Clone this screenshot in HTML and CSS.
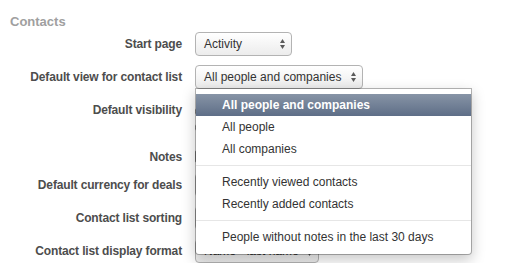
FILE: index.html
```html
<!DOCTYPE html>
<html lang="en">
<head>
  <meta charset="UTF-8">
  <title>Contacts settings</title>
  <link rel="stylesheet" href="styles.css">
</head>
<body>

  <h2 class="section-title">Contacts</h2>

  <div class="form">
    <div class="row">
      <label class="label">Start page</label>
      <div class="select w-activity">
        <span>Activity</span>
        <svg class="arrows" width="5" height="10" viewBox="0 0 5 10"><polygon points="2.5,0 5,4 0,4"/><polygon points="0,6 5,6 2.5,10"/></svg>
      </div>
    </div>

    <div class="row">
      <label class="label">Default view for contact list</label>
      <div class="select w-view open">
        <span>All people and companies</span>
        <svg class="arrows" width="5" height="10" viewBox="0 0 5 10"><polygon points="2.5,0 5,4 0,4"/><polygon points="0,6 5,6 2.5,10"/></svg>

        <!-- open dropdown -->
        <ul class="menu">
          <li class="selected">All people and companies</li>
          <li>All people</li>
          <li>All companies</li>
          <li class="sep"></li>
          <li>Recently viewed contacts</li>
          <li>Recently added contacts</li>
          <li class="sep"></li>
          <li>People without notes in the last 30 days</li>
        </ul>
      </div>
    </div>

    <!-- these controls sit under the open list -->
    <div class="row tall">
      <label class="label">Default visibility</label>
      <div class="radios">
        <div class="radio-line"><span class="radio"></span></div>
        <div class="radio-line"><span class="radio"></span></div>
      </div>
    </div>

    <div class="row short">
      <label class="label">Notes</label>
      <div class="check-line"><span class="check"></span></div>
    </div>

    <div class="row">
      <label class="label">Default currency for deals</label>
      <div class="select w-view"></div>
    </div>

    <div class="row">
      <label class="label">Contact list sorting</label>
      <div class="select w-name"></div>
    </div>

    <div class="row">
      <label class="label">Contact list display format</label>
      <div class="select w-name">
        <span>Name - last name</span>
        <svg class="arrows" width="5" height="10" viewBox="0 0 5 10"><polygon points="2.5,0 5,4 0,4"/><polygon points="0,6 5,6 2.5,10"/></svg>
      </div>
    </div>
  </div>

</body>
</html>
```

FILE: styles.css
```css
* { box-sizing: border-box; }

body {
  margin: 0;
  padding: 14px 0 0 0;
  font-family: 'Liberation Sans', Arial, sans-serif;
  font-size: 12px;
  color: #333;
  background: #fff;
  overflow: hidden;
}

.section-title {
  margin: 0 0 2px 10px;
  font-size: 13px;
  line-height: 16px;
  color: #a0a0a0;
}

.form {
  display: flex;
  flex-direction: column;
  gap: 9px;
}

.row {
  display: flex;
  align-items: center;
  gap: 13px;
  height: 24px;
}

.row.tall { height: 37px; align-items: flex-start; }
.row.tall .label { line-height: 24px; }

.row.short { height: 20px; align-items: flex-end; }
.row.short .label { line-height: 14px; }

.label {
  width: 182px;
  flex-shrink: 0;
  text-align: right;
  font-weight: bold;
  letter-spacing: -0.15px;
  color: #4d4d4d;
}

.select {
  position: relative;
  display: flex;
  align-items: center;
  justify-content: space-between;
  height: 24px;
  padding: 0 6px 0 8px;
  border: 1px solid #b3b3b3;
  border-radius: 4px;
  background: linear-gradient(#ffffff, #ececec);
  color: #333;
}

.w-activity { width: 97px; }
.w-view { width: 168px; }
.w-name { width: 124px; }

.arrows { fill: #5a5a5a; }

.radios { padding-top: 5px; }
.radio-line, .check-line {
  display: flex;
  align-items: center;
  gap: 6px;
  height: 16px;
}
.radio, .check {
  width: 13px;
  height: 13px;
  border: 1px solid #888;
  background: #fff;
}
.radio { border-radius: 50%; }
.check { border-radius: 2px; }

/* open dropdown list */
.menu {
  position: absolute;
  z-index: 10;
  top: 100%;
  left: -1px;
  width: 277px;
  margin: 0;
  padding: 5px 0 6px;
  list-style: none;
  background: #fff;
  background-clip: padding-box;
  border: 1px solid rgba(0, 0, 0, 0.28);
  border-radius: 0 0 4px 4px;
  box-shadow: 0 5px 14px rgba(0, 0, 0, 0.22);
}

.menu li {
  height: 22px;
  line-height: 22px;
  padding-left: 26px;
  color: #333;
  white-space: nowrap;
}

.menu li.selected {
  background: linear-gradient(#8794a6, #5e6e87);
  color: #fff;
  font-weight: bold;
}

.menu li.sep {
  height: 11px;
  padding: 0;
  background: linear-gradient(transparent 5px, #e6e6e6 5px, #e6e6e6 6px, transparent 6px);
}
```
